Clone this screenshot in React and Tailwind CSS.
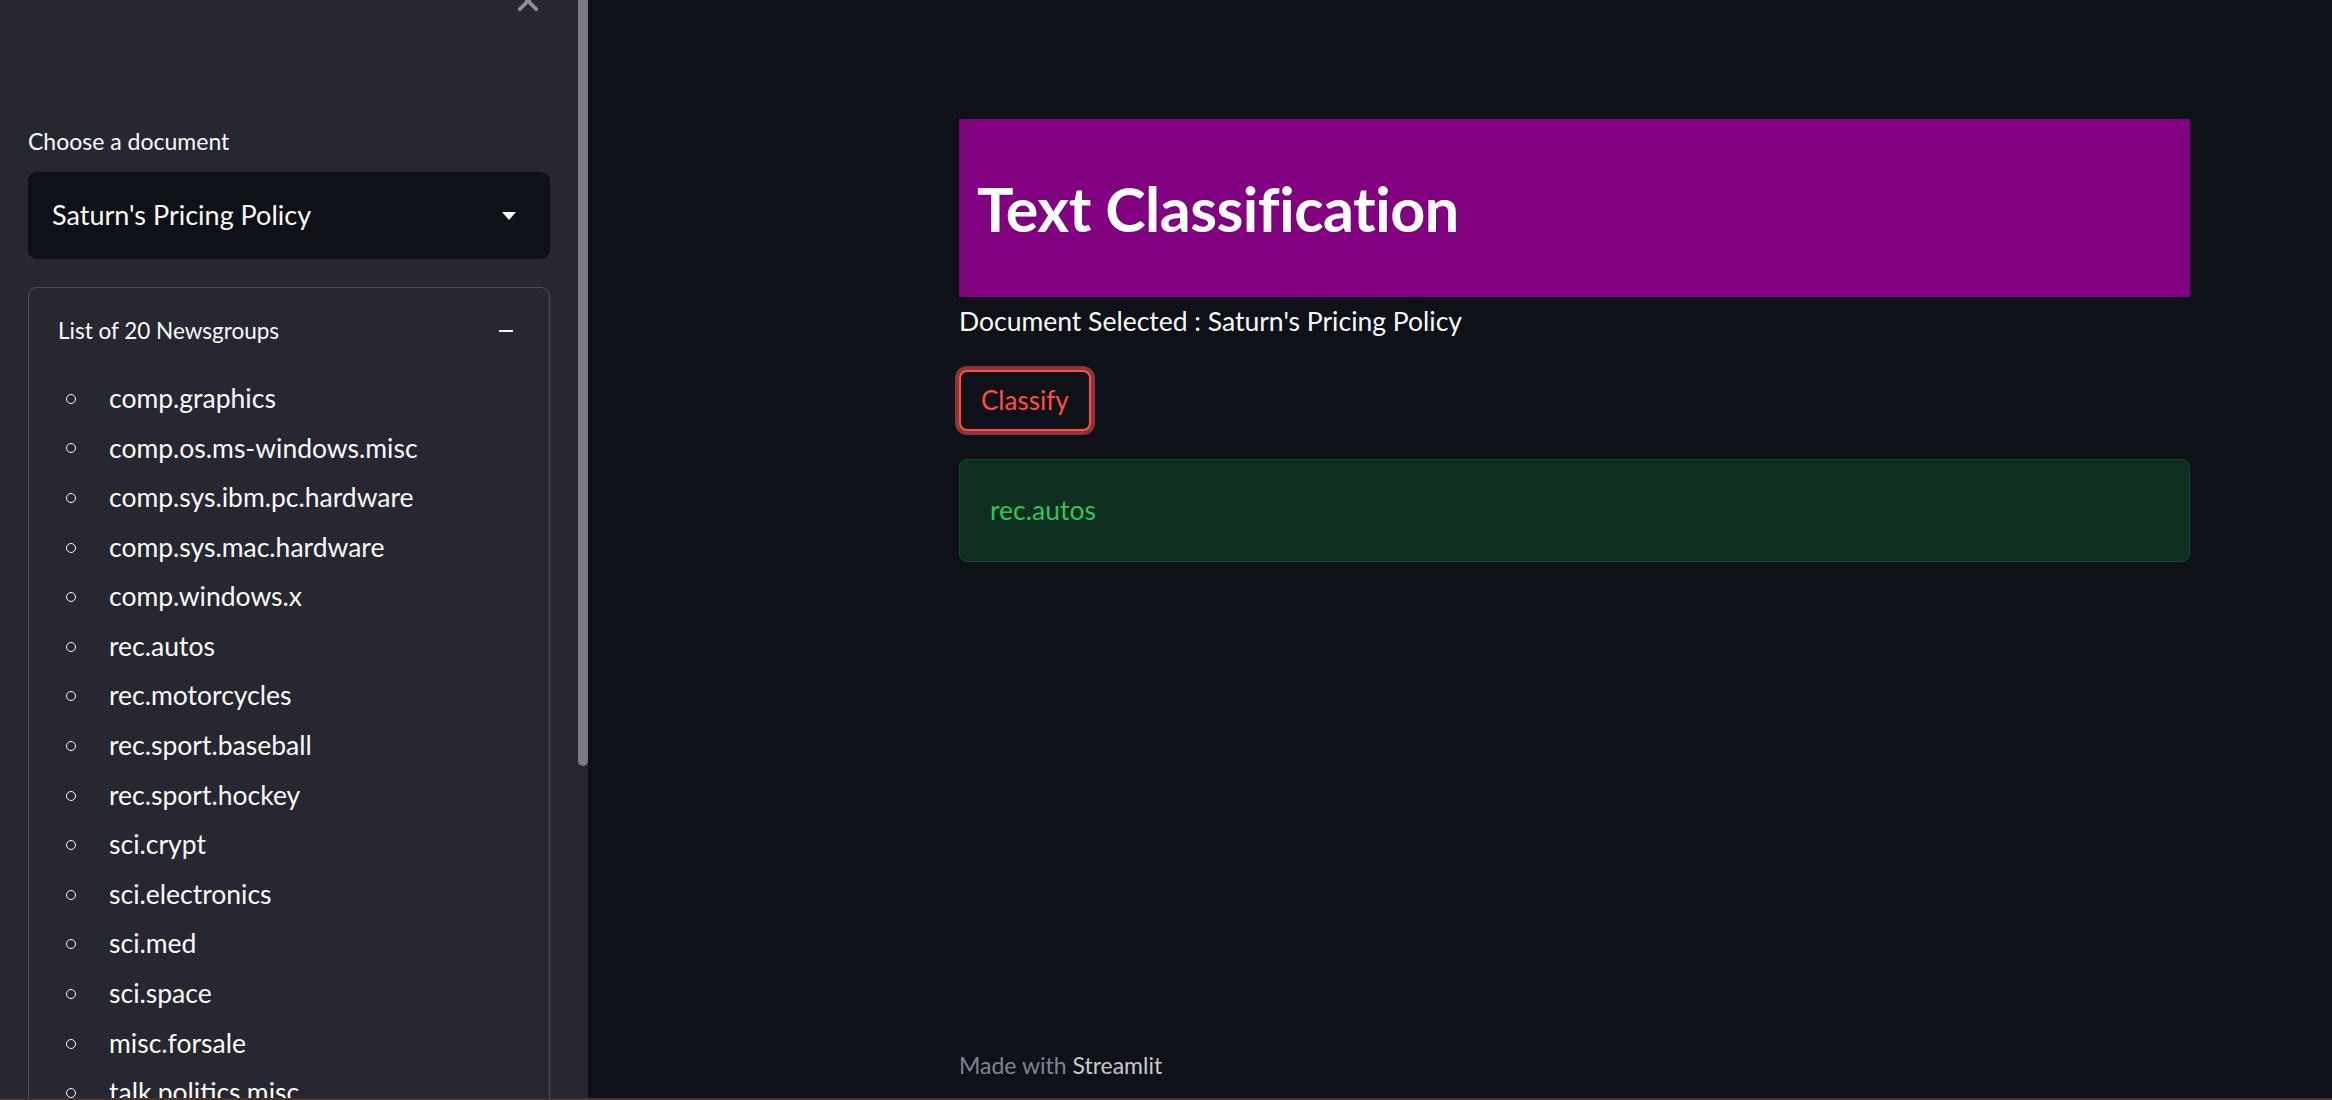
const groups = [
  'comp.graphics',
  'comp.os.ms-windows.misc',
  'comp.sys.ibm.pc.hardware',
  'comp.sys.mac.hardware',
  'comp.windows.x',
  'rec.autos',
  'rec.motorcycles',
  'rec.sport.baseball',
  'rec.sport.hockey',
  'sci.crypt',
  'sci.electronics',
  'sci.med',
  'sci.space',
  'misc.forsale',
  'talk.politics.misc',
  'talk.politics.guns',
  'talk.politics.mideast',
  'talk.religion.misc',
  'alt.atheism',
  'soc.religion.christian',
]

const App = () => {
  return (
    <div className="flex w-[2332px] h-[1100px] overflow-hidden bg-[#0e1117] text-[#fafafa] font-['Lato',sans-serif] relative">

      {/* Sidebar */}
      <aside className="relative w-[588px] shrink-0 h-full bg-[#262730] overflow-hidden">
        {/* close button, cut off at the top */}
        <svg className="absolute left-[514px] top-[-13px] w-[28px] h-[28px] text-[#8e8f97]" viewBox="0 0 24 24" fill="none" stroke="currentColor" strokeWidth="3.2" strokeLinecap="round">
          <path d="M5 5l14 14M19 5L5 19" />
        </svg>

        {/* scrollbar thumb */}
        <div className="absolute left-[578px] top-0 w-[10px] h-[766px] bg-[#7b7c82] rounded-b-full" />

        <div className="w-[522px] ml-[28px] pt-[125px]">
          <label className="block text-[23px] leading-[32px]">Choose a document</label>

          <div className="mt-[15px] h-[87px] rounded-[9px] bg-[#0e1117] flex items-center justify-between pl-[24px] pr-[34px]">
            <span className="text-[27px]">Saturn's Pricing Policy</span>
            <svg className="w-[14px] h-[8px]" viewBox="0 0 14 8" fill="#fafafa">
              <path d="M0 0h14L7 8z" />
            </svg>
          </div>

          <div className="mt-[28px] border border-[#4a4b55] rounded-[9px] h-[900px]">
            <div className="h-[86px] flex items-center justify-between pl-[29px] pr-[36px]">
              <span className="text-[22.5px]">List of 20 Newsgroups</span>
              <div className="w-[14px] h-[2px] bg-[#fafafa]" />
            </div>
            <ul>
              {groups.map((g) => (
                <li key={g} className="h-[49.6px] flex items-center">
                  <span className="ml-[37px] w-[10px] h-[10px] rounded-full border-[1.5px] border-[#fafafa]" />
                  <span className="ml-[33px] text-[26.5px]">{g}</span>
                </li>
              ))}
            </ul>
          </div>
        </div>
      </aside>

      {/* Main */}
      <main className="flex-1 h-full flex flex-col pl-[371px]">
        <div className="w-[1231px] pt-[119px] flex-1">
          <div className="h-[178px] bg-[#800080] flex items-center px-[18px]">
            <h1 className="text-[61px] font-bold text-white leading-none tracking-[-0.5px]">Text Classification</h1>
          </div>

          <p className="mt-[6px] text-[26.5px] leading-[36px]">Document Selected : Saturn's Pricing Policy</p>

          <button className="mt-[31px] h-[61px] px-[20px] rounded-[8px] border-2 border-[#ff4b4b] bg-[#0e1117] text-[#ff4b4b] text-[26px] shadow-[0_0_0_4px_#8a3638]">
            Classify
          </button>

          <div className="mt-[28px] h-[103px] rounded-[8px] bg-[#0e2e20] border border-[#17472a] flex items-center px-[30px]">
            <span className="text-[26.5px] text-[#2fc45c]">rec.autos</span>
          </div>
        </div>

        <footer className="pb-[19px] text-[23px] leading-[32px] text-[#808495]">
          Made with <span className="text-[#c9c9cd]">Streamlit</span>
        </footer>
      </main>

      {/* bottom edge */}
      <div className="absolute left-0 bottom-0 w-full h-[2px] bg-[#4a3322]" />
    </div>
  )
}

export default App
